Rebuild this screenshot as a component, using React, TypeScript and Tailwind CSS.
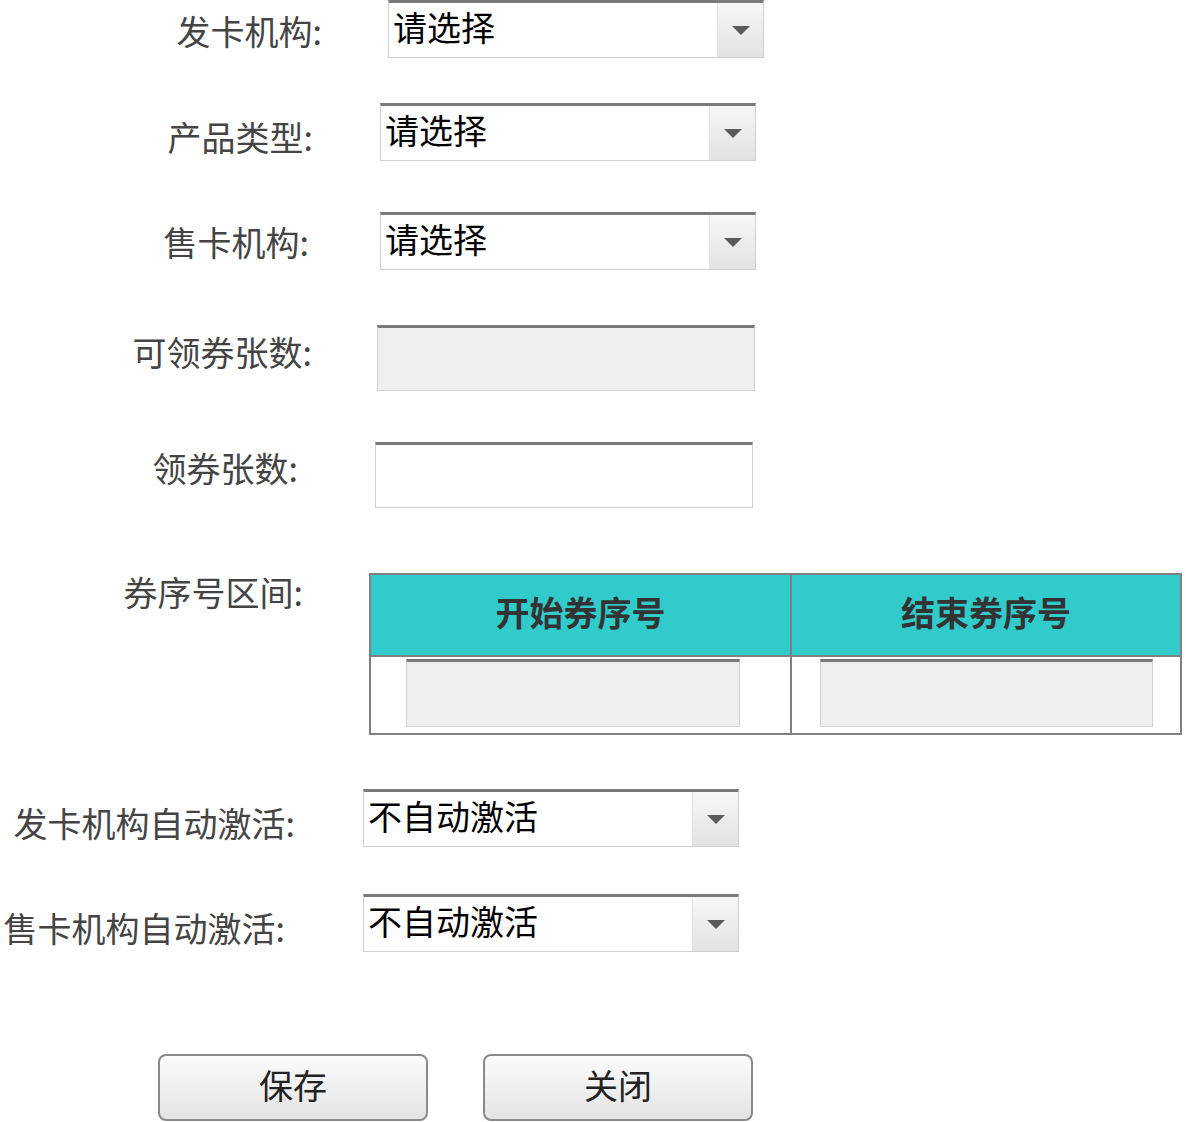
import React from 'react';

const font = { fontFamily: "'Noto Sans CJK SC', 'Noto Sans', sans-serif" };

const Caret = () => (
  <div className="flex h-full w-[46px] items-center justify-center border-l border-[#e3e3e3] bg-gradient-to-b from-[#f7f7f7] to-[#e2e2e2]">
    <svg width="20" height="11" viewBox="0 0 20 11">
      <path d="M1 1 L19 1 L10 10 Z" fill="#5a5a5a" />
    </svg>
  </div>
);

const Select: React.FC<{ value: string; className?: string }> = ({ value, className }) => (
  <div
    className={`flex h-[58px] w-[376px] items-stretch border border-[#cfcfcf] border-t-[3px] border-t-[#7a7a7a] bg-white ${className || ''}`}
  >
    <div className="flex flex-1 items-center pb-[7px] pl-[4px] text-[34px] leading-none text-black">{value}</div>
    <Caret />
  </div>
);

const TextBox: React.FC<{ grey?: boolean; className?: string }> = ({ grey, className }) => (
  <div
    className={`border border-[#cfcfcf] border-t-[3px] border-t-[#7a7a7a] ${grey ? 'bg-[#efefef]' : 'bg-white'} ${className || ''}`}
  />
);

const Label: React.FC<{ text: string; width: string; className?: string }> = ({ text, width, className }) => (
  <div className={`${width} shrink-0 whitespace-nowrap text-right text-[34px] leading-none text-[#444] ${className || ''}`}>
    {text}
  </div>
);

export default function App() {
  return (
    <div className="relative h-[1122px] w-[1186px] overflow-hidden bg-white" style={font}>
      <div className="flex flex-col">
        {/* 发卡机构 */}
        <div className="flex items-center">
          <Label text="发卡机构:" width="w-[322px]" className="mt-[4px]" />
          <Select value="请选择" className="ml-[66px]" />
        </div>

        {/* 产品类型 */}
        <div className="mt-[45px] flex items-center">
          <Label text="产品类型:" width="w-[313px]" className="mt-[10px]" />
          <Select value="请选择" className="ml-[67px]" />
        </div>

        {/* 售卡机构 */}
        <div className="mt-[51px] flex items-center">
          <Label text="售卡机构:" width="w-[309px]" className="mt-[2px]" />
          <Select value="请选择" className="ml-[71px]" />
        </div>

        {/* 可领券张数 */}
        <div className="mt-[55px] flex items-center">
          <Label text="可领券张数:" width="w-[312px]" className="mb-[12px]" />
          <TextBox grey className="ml-[65px] h-[66px] w-[378px]" />
        </div>

        {/* 领券张数 */}
        <div className="mt-[51px] flex items-center">
          <Label text="领券张数:" width="w-[298px]" className="mb-[14px]" />
          <TextBox className="ml-[77px] h-[66px] w-[378px]" />
        </div>

        {/* 券序号区间 */}
        <div className="mt-[65px] flex items-start">
          <Label text="券序号区间:" width="w-[303px]" className="mt-[2px]" />
          <table className="ml-[66px] w-[813px] border-collapse border-2 border-[#808080]">
            <thead>
              <tr className="h-[82px] bg-[#32cbcb]">
                <th className="w-[421px] border-2 border-[#808080] pb-[6px] text-center text-[34px] font-bold leading-none text-[#333]">
                  开始券序号
                </th>
                <th className="border-2 border-[#808080] pb-[6px] text-center text-[34px] font-bold leading-none text-[#333]">
                  结束券序号
                </th>
              </tr>
            </thead>
            <tbody>
              <tr className="h-[78px]">
                <td className="border-2 border-[#808080] align-top">
                  <TextBox grey className="ml-[35px] mt-[2px] h-[68px] w-[334px]" />
                </td>
                <td className="border-2 border-[#808080] align-top">
                  <TextBox grey className="ml-[28px] mt-[2px] h-[68px] w-[333px]" />
                </td>
              </tr>
            </tbody>
          </table>
        </div>

        {/* 发卡机构自动激活 */}
        <div className="mt-[54px] flex items-center">
          <Label text="发卡机构自动激活:" width="w-[295px]" className="mt-[10px]" />
          <Select value="不自动激活" className="ml-[68px]" />
        </div>

        {/* 售卡机构自动激活 */}
        <div className="mt-[47px] flex items-center">
          <Label text="售卡机构自动激活:" width="w-[285px]" className="mt-[10px]" />
          <Select value="不自动激活" className="ml-[78px]" />
        </div>

        {/* 按钮 */}
        <div className="mt-[102px] flex">
          <button
            type="button"
            className="ml-[158px] flex h-[67px] w-[270px] items-center justify-center rounded-[8px] border-2 border-[#8a8a8a] bg-gradient-to-b from-[#fbfbfb] to-[#e4e4e4] pb-[6px] text-[34px] leading-none text-[#222]"
          >
            保存
          </button>
          <button
            type="button"
            className="ml-[55px] flex h-[67px] w-[270px] items-center justify-center rounded-[8px] border-2 border-[#8a8a8a] bg-gradient-to-b from-[#fbfbfb] to-[#e4e4e4] pb-[6px] text-[34px] leading-none text-[#222]"
          >
            关闭
          </button>
        </div>
      </div>
    </div>
  );
}
